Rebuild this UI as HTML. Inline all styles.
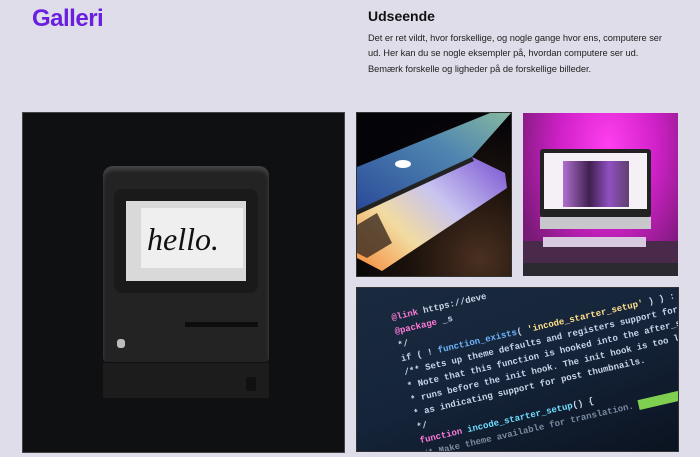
<!DOCTYPE html>
<html><head><meta charset="utf-8"><style>
html,body{margin:0;padding:0;}
body{width:700px;height:457px;background:#dedde9;position:relative;overflow:hidden;font-family:"Liberation Sans",sans-serif;}
.a{position:absolute;}
h1{position:absolute;left:32px;top:5px;margin:0;font-size:24px;font-weight:bold;color:#6a1fe0;letter-spacing:-0.5px;}
h2{position:absolute;left:368px;top:8px;margin:0;font-size:14px;font-weight:bold;color:#111;}
p{position:absolute;left:368px;top:31px;margin:0;width:320px;font-size:9.3px;line-height:15.3px;color:#222;letter-spacing:-0.05px;white-space:nowrap;}
</style></head><body>
<h1>Galleri</h1>
<h2>Udseende</h2>
<p>Det er ret vildt, hvor forskellige, og nogle gange hvor ens, computere ser<br>ud. Her kan du se nogle eksempler på, hvordan computere ser ud.<br>Bemærk forskelle og ligheder på de forskellige billeder.</p>

<div class="a" style="left:23px;top:113px;width:321px;height:339px;background:#0f1012;outline:1px solid #444;">
  <div class="a" style="left:80px;top:53px;width:166px;height:196px;background:#232324;border-radius:10px 10px 4px 4px;box-shadow:inset 0 4px 4px #444;"></div>
  <div class="a" style="left:91px;top:76px;width:144px;height:104px;background:#1a1a1b;border-radius:8px;"></div>
  <div class="a" style="left:103px;top:88px;width:120px;height:80px;background:#d9d9d9;"></div>
  <div class="a" style="left:118px;top:95px;width:102px;height:60px;background:#efefef;"></div>
  <div class="a" style="left:124px;top:108px;font-family:'Liberation Serif',serif;font-style:italic;font-size:32px;color:#111;">hello.</div>
  <div class="a" style="left:162px;top:209px;width:73px;height:5px;background:#0d0d0d;"></div>
  <div class="a" style="left:94px;top:226px;width:8px;height:9px;background:#bbb;border-radius:3px;"></div>
  <div class="a" style="left:80px;top:250px;width:166px;height:35px;background:#1c1c1d;"></div>
  <div class="a" style="left:223px;top:264px;width:10px;height:14px;background:#111;"></div>
</div>

<div class="a" style="left:357px;top:113px;width:154px;height:163px;overflow:hidden;outline:1px solid #333;">
<svg width="154" height="163" viewBox="0 0 154 163">
<defs>
<radialGradient id="bg" cx="0.8" cy="0.9" r="0.9"><stop offset="0" stop-color="#4a3020"/><stop offset="0.5" stop-color="#1c120c"/><stop offset="1" stop-color="#040308"/></radialGradient>
<linearGradient id="lid" x1="0" y1="1" x2="1" y2="0"><stop offset="0" stop-color="#2a4a9a"/><stop offset="0.6" stop-color="#4f86b0"/><stop offset="1" stop-color="#86b8a0"/></linearGradient>
<linearGradient id="base" x1="0" y1="1" x2="1" y2="0.2"><stop offset="0" stop-color="#f58a3a"/><stop offset="0.35" stop-color="#f2dba0"/><stop offset="0.65" stop-color="#c8c4f0"/><stop offset="1" stop-color="#8a6ad8"/></linearGradient>
</defs>
<rect width="154" height="163" fill="url(#bg)"/>
<polygon points="0,97 115,44 148,60 150,75 25,158 0,145" fill="url(#base)"/>
<polygon points="0,54 133,0 154,0 115,44 0,97" fill="url(#lid)"/>
<polygon points="0,97 115,44 117,48 0,102" fill="#222"/>
<polygon points="0,112 20,100 35,130 10,145 0,140" fill="#3a2a20" opacity="0.8"/>
<ellipse cx="46" cy="51" rx="8" ry="4" fill="#fff"/>
</svg>
</div>

<div class="a" style="left:523px;top:113px;width:155px;height:163px;overflow:hidden;background:radial-gradient(ellipse at 55% 20%,#ff3ff0 0%,#d021c8 40%,#7a1a78 80%);">
  <div class="a" style="left:17px;top:36px;width:111px;height:68px;background:#222;border-radius:3px;"></div>
  <div class="a" style="left:21px;top:40px;width:103px;height:56px;background:#f4f0f6;"></div>
  <div class="a" style="left:40px;top:48px;width:66px;height:46px;background:linear-gradient(90deg,#b070d0,#402050 40%,#9050c0 70%,#604070);"></div>
  <div class="a" style="left:17px;top:104px;width:111px;height:12px;background:#c8c8cc;"></div>
  <div class="a" style="left:0;top:128px;width:155px;height:35px;background:#4a2a4a;"></div>
  <div class="a" style="left:20px;top:124px;width:103px;height:10px;background:#d8c8e0;"></div>
  <div class="a" style="left:0;top:150px;width:155px;height:13px;background:#2a2a30;"></div>
</div>

<div class="a" style="left:357px;top:288px;width:321px;height:163px;overflow:hidden;background:linear-gradient(160deg,#1a2a3e 0%,#15243a 50%,#0b1320 100%);outline:1px solid #333;">
  <div class="a" style="left:30px;top:10px;width:300px;transform:rotate(-13deg);transform-origin:0 0;font-family:'Liberation Mono',monospace;font-size:9px;line-height:14px;color:#c8d4e8;white-space:nowrap;font-weight:bold;">
    <div style="padding-top:14px;"><span style="color:#ff7ad9">@link</span> https://deve</div>
    <div><span style="color:#ff7ad9">@package</span> _s</div>
    <div>*/</div>
    <div>if ( ! <span style="color:#6fb7ff">function_exists</span>( <span style="color:#ffe08a">'incode_starter_setup'</span> ) ) :</div>
    <div>/** Sets up theme defaults and registers support for various</div>
    <div>* Note that this function is hooked into the after_setup_theme</div>
    <div>* runs before the init hook. The init hook is too late for</div>
    <div>* as indicating support for post thumbnails.</div>
    <div>*/</div>
    <div><span style="color:#ff7ad9">function</span> <span style="color:#6fdfff">incode_starter_setup</span>() {</div>
    <div style="color:#7a8aa0">/* Make theme available for translation. <span style="background:#7fcf50;color:#7fcf50">xxxxxxxx</span></div>
  </div>
</div>
</body></html>
